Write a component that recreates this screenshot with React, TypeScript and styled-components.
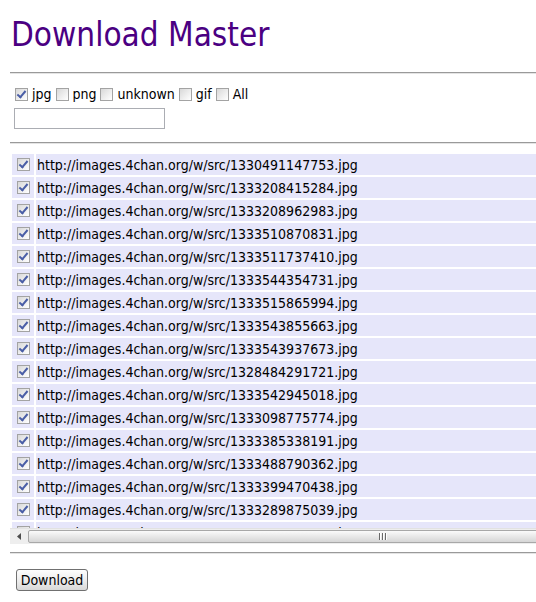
import styled, { createGlobalStyle } from "styled-components"

const urls = [
  "1330491147753",
  "1333208415284",
  "1333208962983",
  "1333510870831",
  "1333511737410",
  "1333544354731",
  "1333515865994",
  "1333543855663",
  "1333543937673",
  "1328484291721",
  "1333542945018",
  "1333098775774",
  "1333385338191",
  "1333488790362",
  "1333399470438",
  "1333289875039",
  "1333470861217",
  "1333521094482",
].map((id) => `http://images.4chan.org/w/src/${id}.jpg`)

const filters = [
  { label: "jpg", checked: true },
  { label: "png", checked: false },
  { label: "unknown", checked: false },
  { label: "gif", checked: false },
  { label: "All", checked: false },
]

const GlobalStyle = createGlobalStyle`
  html, body {
    margin: 0;
    padding: 0;
    overflow: hidden;
    background: #fff;
    font-family: "DejaVu Sans Condensed", "DejaVu Sans", Tahoma, sans-serif;
    font-stretch: condensed;
    color: #000;
  }
`

const Page = styled.div`
  width: 640px;
  padding-left: 10px;
`

const Title = styled.h1`
  margin: 15px 0 0 1px;
  font-size: 33px;
  line-height: 40px;
  font-weight: normal;
  color: #4b0082;
`

const Divider = styled.hr<{ $top: number }>`
  margin: ${(p) => p.$top}px 0 0 0;
  height: 0;
  border: none;
  border-top: 1px solid #9a9a9a;
  border-bottom: 1px solid #e4e4e4;
`

const FilterRow = styled.div`
  display: flex;
  align-items: center;
  gap: 4px;
  height: 20px;
  margin-top: 10px;
  padding-left: 5px;
  font-size: 14px;
`

const Check = styled.input.attrs({ type: "checkbox" })<{ $block?: boolean }>`
  appearance: none;
  position: relative;
  flex: none;
  width: 13px;
  height: 13px;
  margin: ${(p) => (p.$block ? "3px 3px 3px 4px" : "0")};
  display: ${(p) => (p.$block ? "block" : "inline-block")};
  border: 1px solid #a3a3a3;
  background: linear-gradient(135deg, #d8d8d8 0%, #f0f0f0 60%, #fff 100%);
  box-sizing: border-box;

  &:checked::after {
    content: "";
    position: absolute;
    left: 3px;
    top: 0px;
    width: 3px;
    height: 7px;
    border: solid #4a5ea6;
    border-width: 0 2px 2px 0;
    transform: rotate(40deg);
  }
`

const FilterText = styled.span`
  line-height: 20px;
`

const Pattern = styled.input`
  display: block;
  box-sizing: border-box;
  width: 151px;
  height: 21px;
  margin: 4px 0 0 4px;
  border: 1px solid #abadb3;
  background: #fff;
`

const ListBox = styled.div`
  margin-top: 8px;
`

const Viewport = styled.div`
  height: 376px;
  overflow: hidden;
`

const Table = styled.table`
  width: 100%;
  border-spacing: 2px;
  border-collapse: separate;
`

const CheckCell = styled.td`
  width: 20px;
  padding: 1px;
  background: #e6e6fa;
`

const UrlCell = styled.td`
  padding: 1px;
  background: #e6e6fa;
  white-space: nowrap;
  font-size: 14px;
  vertical-align: middle;
`

const HScroll = styled.div`
  display: flex;
  height: 16px;
  background: #eeeeee;
  border-top: 1px solid #e2e2e2;
  box-sizing: border-box;
`

const ArrowButton = styled.div`
  flex: none;
  width: 18px;
  display: flex;
  align-items: center;
  justify-content: center;
`

const Thumb = styled.div`
  flex: none;
  width: 710px;
  margin: 1px 0;
  box-sizing: border-box;
  border: 1px solid #a8a8a8;
  border-radius: 2px;
  background: linear-gradient(#fbfbfb, #e8e8e8 50%, #d6d6d6);
  display: flex;
  align-items: center;
  justify-content: center;
`

const Grip = styled.div`
  display: flex;
  gap: 1px;

  span {
    width: 1px;
    height: 7px;
    background: #6a6a6a;
    border-right: 1px solid #fff;
  }
`

const Button = styled.button`
  display: block;
  margin: 15px 0 0 6px;
  height: 22px;
  width: 72px;
  padding: 0;
  font-family: inherit;
  font-size: 14px;
  color: #000;
  border: 1px solid #707070;
  border-radius: 3px;
  background: linear-gradient(#fdfdfd, #ececec 55%, #d8d8d8);
`

export default function App() {
  return (
    <>
      <GlobalStyle />
      <Page>
        <Title>Download Master</Title>
        <Divider $top={17} />
        <FilterRow>
          {filters.map((f) => (
            <>
              <Check key={f.label + "c"} defaultChecked={f.checked} />
              <FilterText key={f.label}>{f.label}</FilterText>
            </>
          ))}
        </FilterRow>
        <Pattern type="text" />
        <Divider $top={13} />
        <ListBox>
          <Viewport>
            <Table>
              <tbody>
                {urls.map((url) => (
                  <tr key={url}>
                    <CheckCell>
                      <Check $block defaultChecked />
                    </CheckCell>
                    <UrlCell>{url}</UrlCell>
                  </tr>
                ))}
              </tbody>
            </Table>
          </Viewport>
          <HScroll>
            <ArrowButton>
              <svg width="4" height="7" viewBox="0 0 4 7">
                <path d="M4 0 L0 3.5 L4 7 Z" fill="#4d4d4d" />
              </svg>
            </ArrowButton>
            <Thumb>
              <Grip>
                <span />
                <span />
                <span />
              </Grip>
            </Thumb>
          </HScroll>
        </ListBox>
        <Divider $top={8} />
        <Button>Download</Button>
      </Page>
    </>
  )
}
